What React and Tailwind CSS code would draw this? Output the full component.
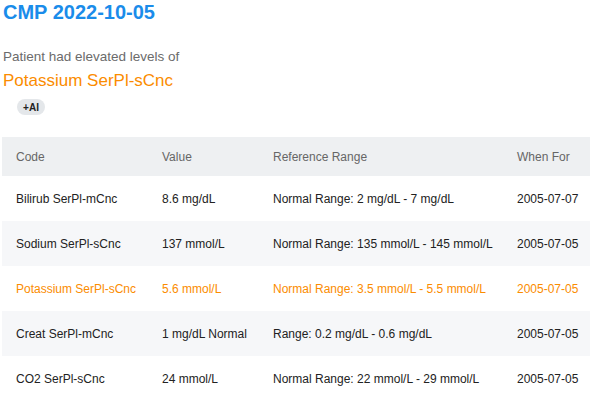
import React from "react";

const ROWS = [
  { code: "Bilirub SerPl-mCnc", value: "8.6 mg/dL", range: "Normal Range: 2 mg/dL - 7 mg/dL", when: "2005-07-07" },
  { code: "Sodium SerPl-sCnc", value: "137 mmol/L", range: "Normal Range: 135 mmol/L - 145 mmol/L", when: "2005-07-05" },
  { code: "Potassium SerPl-sCnc", value: "5.6 mmol/L", range: "Normal Range: 3.5 mmol/L - 5.5 mmol/L", when: "2005-07-05", high: true },
  { code: "Creat SerPl-mCnc", value: "1 mg/dL Normal", range: "Range: 0.2 mg/dL - 0.6 mg/dL", when: "2005-07-05" },
  { code: "CO2 SerPl-sCnc", value: "24 mmol/L", range: "Normal Range: 22 mmol/L - 29 mmol/L", when: "2005-07-05" },
];

export default function App() {
  return (
    <div
      className="w-[600px] h-[400px] overflow-hidden bg-white"
      style={{ fontFamily: '"Liberation Sans", Arial, sans-serif' }}
    >
      <div className="pl-[3px]">
        <h1 className="text-[20px] leading-[24px] font-bold text-[#1a8cea]">
          CMP 2022-10-05
        </h1>
        <p className="mt-[23px] text-[13.5px] leading-[20px] text-[#6b6b6b]">
          Patient had elevated levels of
        </p>
        <p className="mt-[2px] text-[17px] leading-[24px] text-[#fb8c00]">
          Potassium SerPl-sCnc
        </p>
        <div className="mt-[6px] ml-[14px] w-[28px] h-[16px] rounded-full bg-[#e4e7ea] flex items-center justify-center text-[10px] font-bold text-[#222]">
          +AI
        </div>
      </div>

      <table className="mt-[22px] ml-[2px] w-[588px] table-fixed border-collapse text-[12px]">
        <colgroup>
          <col className="w-[146px]" />
          <col className="w-[111px]" />
          <col className="w-[244px]" />
          <col className="w-[87px]" />
        </colgroup>
        <thead>
          <tr className="bg-[#eef0f2] h-[39px] text-[#666]">
            <th className="text-left font-normal pl-[14px]">Code</th>
            <th className="text-left font-normal pl-[14px]">Value</th>
            <th className="text-left font-normal pl-[14px]">Reference Range</th>
            <th className="text-left font-normal pl-[14px]">When For</th>
          </tr>
        </thead>
        <tbody>
          {ROWS.map((r, i) => (
            <tr
              key={r.code}
              className={`h-[45px] ${i % 2 === 1 ? "bg-[#f6f7f9]" : "bg-white"} ${
                r.high ? "text-[#fb8c00]" : "text-[#222]"
              }`}
            >
              <td className="pl-[14px] whitespace-nowrap">{r.code}</td>
              <td className="pl-[14px] whitespace-nowrap">{r.value}</td>
              <td className="pl-[14px] whitespace-nowrap">{r.range}</td>
              <td className="pl-[14px] whitespace-nowrap">{r.when}</td>
            </tr>
          ))}
        </tbody>
      </table>
    </div>
  );
}
